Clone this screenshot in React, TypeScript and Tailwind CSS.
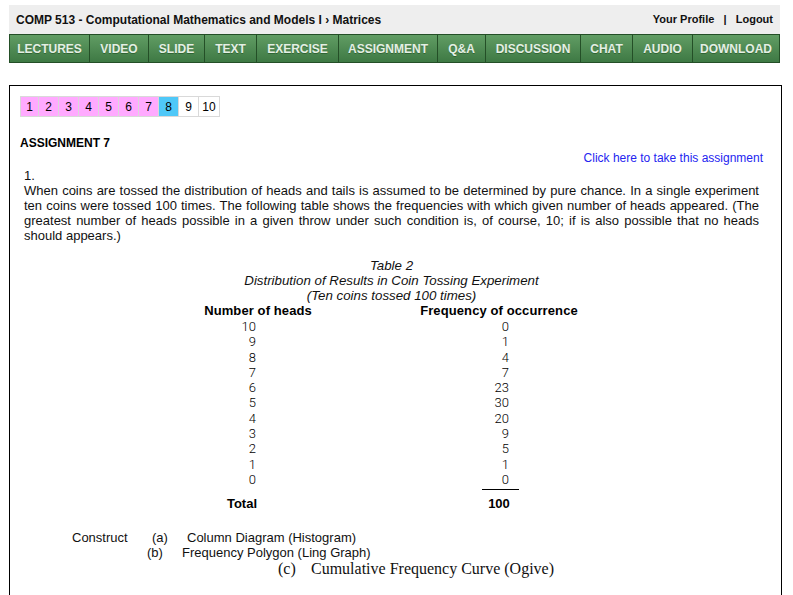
import React from "react";

const NAV = [
  { label: "LECTURES", w: "w-[80px]" },
  { label: "VIDEO", w: "w-[59px]" },
  { label: "SLIDE", w: "w-[56px]" },
  { label: "TEXT", w: "w-[52px]" },
  { label: "EXERCISE", w: "w-[82px]" },
  { label: "ASSIGNMENT", w: "w-[99px]" },
  { label: "Q&A", w: "w-[48px]" },
  { label: "DISCUSSION", w: "w-[95px]" },
  { label: "CHAT", w: "w-[52px]" },
  { label: "AUDIO", w: "w-[60px]" },
  { label: "DOWNLOAD", w: "w-[87px]" },
];

const ROWS: [number, number][] = [
  [10, 0], [9, 1], [8, 4], [7, 7], [6, 23], [5, 30], [4, 20], [3, 9], [2, 5], [1, 1], [0, 0],
];

function Pager() {
  return (
    <div className="flex border border-[#d9d9d9] w-fit">
      {Array.from({ length: 10 }).map((_, i) => {
        const n = i + 1;
        const bg = n < 8 ? "bg-[#ffaaff]" : n === 8 ? "bg-[#4fc8f8]" : "bg-white";
        return (
          <div
            key={n}
            className={`${bg} ${i === 0 ? "w-[18px]" : "w-[20px]"} h-[19px] flex items-center justify-center text-[12px] ${i < 9 ? "border-r border-[#d9d9d9]" : ""}`}
          >
            {n}
          </div>
        );
      })}
    </div>
  );
}

export default function App() {
  return (
    <div className="w-[793px] h-[595px] overflow-hidden bg-white font-['Liberation_Sans',Arial,sans-serif] text-black">
      {/* top header */}
      <div className="mt-[5px] ml-[9px] w-[771px] h-[29px] bg-[#eeeeee] flex items-center justify-between pl-[7px] pr-[7px]">
        <span className="text-[12px] font-bold text-[#111]">
          COMP 513 - Computational Mathematics and Models I › Matrices
        </span>
        <span className="text-[11px] font-bold text-[#111]">
          Your Profile&nbsp;&nbsp;&nbsp;|&nbsp;&nbsp;&nbsp;Logout
        </span>
      </div>

      {/* nav */}
      <div className="ml-[9px] flex h-[29px] border-l border-[#244f27]">
        {NAV.map((n) => (
          <div
            key={n.label}
            className={`${n.w} h-full flex items-center justify-center border-y border-r border-[#244f27] bg-gradient-to-b from-[#619d64] to-[#3e7944] text-[#e4efe4] text-[12px] font-bold [text-shadow:0_1px_0_rgba(0,40,0,0.35)]`}
          >
            {n.label}
          </div>
        ))}
      </div>

      {/* content box */}
      <div className="mt-[22px] ml-[9px] w-[773px] h-[600px] border border-black pt-[10px] pl-[10px] pr-[18px]">
        <Pager />

        <div className="mt-[19px] text-[12px] font-bold leading-[15px]">ASSIGNMENT 7</div>
        <div className="text-right text-[12px] leading-[15px] text-[#2424f0]">
          Click here to take this assignment
        </div>

        <div className="mt-[2px] pl-[4px] pr-[4px] text-[13px] leading-[15px] text-[#111]">
          <div>1.</div>
          <p className="text-justify">
            When coins are tossed the distribution of heads and tails is assumed to be determined by pure chance. In a single experiment ten coins were tossed 100 times. The following table shows the frequencies with which given number of heads appeared. (The greatest number of heads possible in a given throw under such condition is, of course, 10; if is also possible that no heads should appears.)
          </p>
        </div>

        {/* table */}
        <div className="mt-[15px] text-center italic text-[13.3px] leading-[15px] text-[#111]">
          <div>Table 2</div>
          <div>Distribution of Results in Coin Tossing Experiment</div>
          <div>(Ten coins tossed 100 times)</div>
        </div>

        <div className="flex h-[16px] items-center text-[13px] font-bold tracking-[0.1px]">
          <div className="ml-[178px] w-[120px] text-center">Number of heads</div>
          <div className="ml-[90px] w-[182px] text-center">Frequency of occurrence</div>
        </div>

        <div className="font-['Roboto',sans-serif] font-light text-[13px]">
          {ROWS.map(([h, f]) => (
            <div key={h} className="flex h-[15.3px] items-center">
              <div className="ml-[179px] w-[57px] text-right">{h}</div>
              <div className="w-[253px] text-right">{f}</div>
            </div>
          ))}
        </div>

        <div className="flex mt-[2px]">
          <div className="ml-[462px] w-[37px] border-t border-black" />
        </div>
        <div className="flex h-[26px] items-center text-[13px] font-bold">
          <div className="ml-[182px] w-[80px] text-center">Total</div>
          <div className="ml-[177px] w-[80px] text-center">100</div>
        </div>

        {/* construct */}
        <div className="mt-[14px] text-[13px] leading-[15px] text-[#111]">
          <div className="flex">
            <span className="ml-[52px] w-[80px]">Construct</span>
            <span className="w-[35px]">(a)</span>
            <span>Column Diagram (Histogram)</span>
          </div>
          <div className="flex">
            <span className="ml-[127px] w-[35px]">(b)</span>
            <span>Frequency Polygon (Ling Graph)</span>
          </div>
          <div className="flex font-['Liberation_Serif',serif] text-[16px] leading-[17px]">
            <span className="ml-[258px] w-[33px]">(c)</span>
            <span>Cumulative Frequency Curve (Ogive)</span>
          </div>
        </div>
      </div>
    </div>
  );
}
